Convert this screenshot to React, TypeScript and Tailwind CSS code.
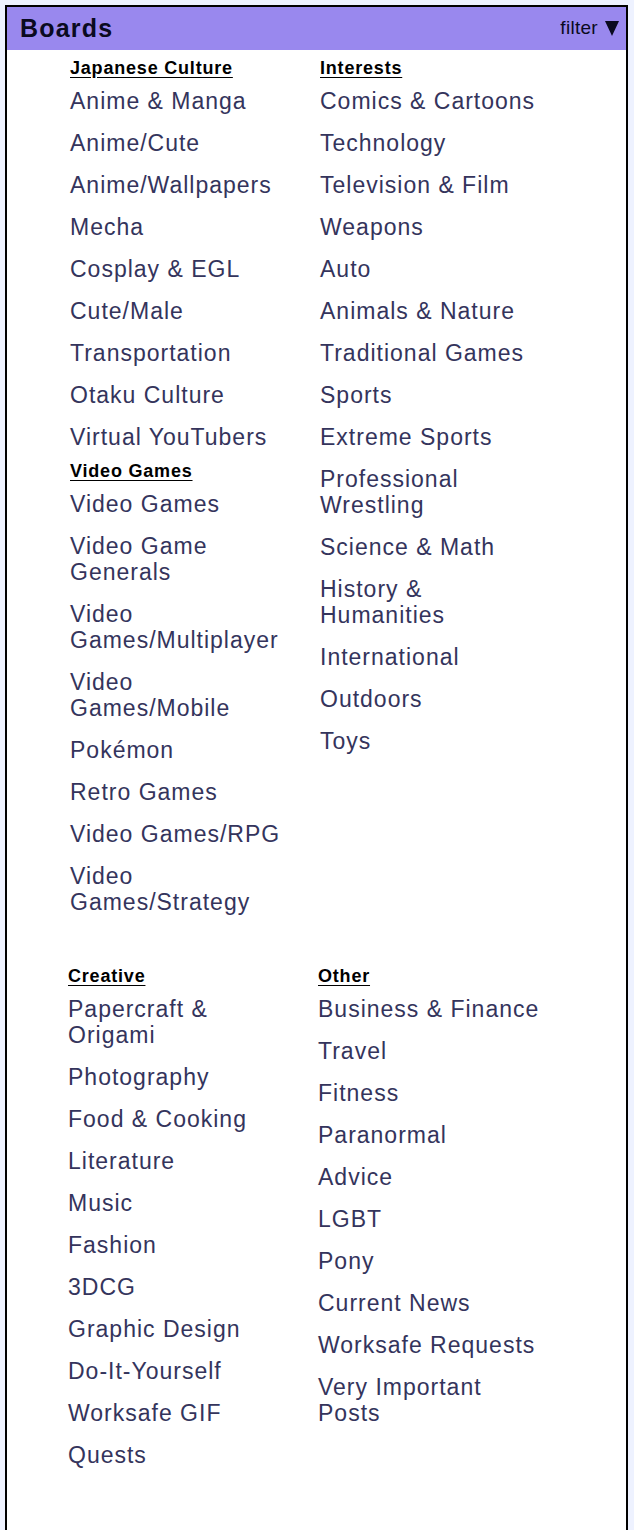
const sections = [
  [
    {
      groups: [
        {
          title: "Japanese Culture",
          boards: [
            "Anime & Manga",
            "Anime/Cute",
            "Anime/Wallpapers",
            "Mecha",
            "Cosplay & EGL",
            "Cute/Male",
            "Transportation",
            "Otaku Culture",
            "Virtual YouTubers",
          ],
        },
        {
          title: "Video Games",
          boards: [
            "Video Games",
            "Video Game Generals",
            "Video Games/Multiplayer",
            "Video Games/Mobile",
            "Pokémon",
            "Retro Games",
            "Video Games/RPG",
            "Video Games/Strategy",
          ],
        },
      ],
    },
    {
      groups: [
        {
          title: "Interests",
          boards: [
            "Comics & Cartoons",
            "Technology",
            "Television & Film",
            "Weapons",
            "Auto",
            "Animals & Nature",
            "Traditional Games",
            "Sports",
            "Extreme Sports",
            "Professional Wrestling",
            "Science & Math",
            "History & Humanities",
            "International",
            "Outdoors",
            "Toys",
          ],
        },
      ],
    },
  ],
  [
    {
      groups: [
        {
          title: "Creative",
          boards: [
            "Papercraft & Origami",
            "Photography",
            "Food & Cooking",
            "Literature",
            "Music",
            "Fashion",
            "3DCG",
            "Graphic Design",
            "Do-It-Yourself",
            "Worksafe GIF",
            "Quests",
          ],
        },
      ],
    },
    {
      groups: [
        {
          title: "Other",
          boards: [
            "Business & Finance",
            "Travel",
            "Fitness",
            "Paranormal",
            "Advice",
            "LGBT",
            "Pony",
            "Current News",
            "Worksafe Requests",
            "Very Important Posts",
          ],
        },
      ],
    },
  ],
];

function Column({ groups }: { groups: { title: string; boards: string[] }[] }) {
  return (
    <div className="w-[250px] pr-[25px]">
      {groups.map((g) => (
        <div key={g.title}>
          <div className="mt-[3px] mb-[2px] h-[20px] text-[18px] leading-[20px] font-bold tracking-[0.8px] text-black underline underline-offset-[3px]">
            {g.title}
          </div>
          <ul>
            {g.boards.map((b) => (
              <li
                key={b}
                className="py-[8px] text-[23px] leading-[26px] tracking-[1px] text-[#34345c]"
              >
                <a className="cursor-pointer">{b}</a>
              </li>
            ))}
          </ul>
        </div>
      ))}
    </div>
  );
}

export default function App() {
  return (
    <div
      className="min-h-[1530px] bg-[#eef2ff] pt-[5px] pl-[5px] pr-[6px]"
      style={{ fontFamily: '"Liberation Sans", Arial, sans-serif' }}
    >
      <div className="border-2 border-black bg-white pb-[80px]">
        <div className="h-[43px] bg-[#9988ee] flex items-center justify-between pl-[13px] pr-[7px]">
          <h2 className="text-[25px] font-bold tracking-[1.2px] text-[#0a0a20]">Boards</h2>
          <span className="flex items-center gap-[7px] text-[19px] tracking-[0.3px] text-[#0a0a20]">
            filter
            <svg width="14" height="15" viewBox="0 0 14 15">
              <path d="M0 0 H14 L7 15 Z" fill="#0a0a20" />
            </svg>
          </span>
        </div>
        <div className="flex pt-[5px] pl-[63px]">
          <Column groups={sections[0][0].groups} />
          <Column groups={sections[0][1].groups} />
        </div>
        <div className="flex mt-[40px] pl-[61px]">
          <Column groups={sections[1][0].groups} />
          <Column groups={sections[1][1].groups} />
        </div>
      </div>
    </div>
  );
}
